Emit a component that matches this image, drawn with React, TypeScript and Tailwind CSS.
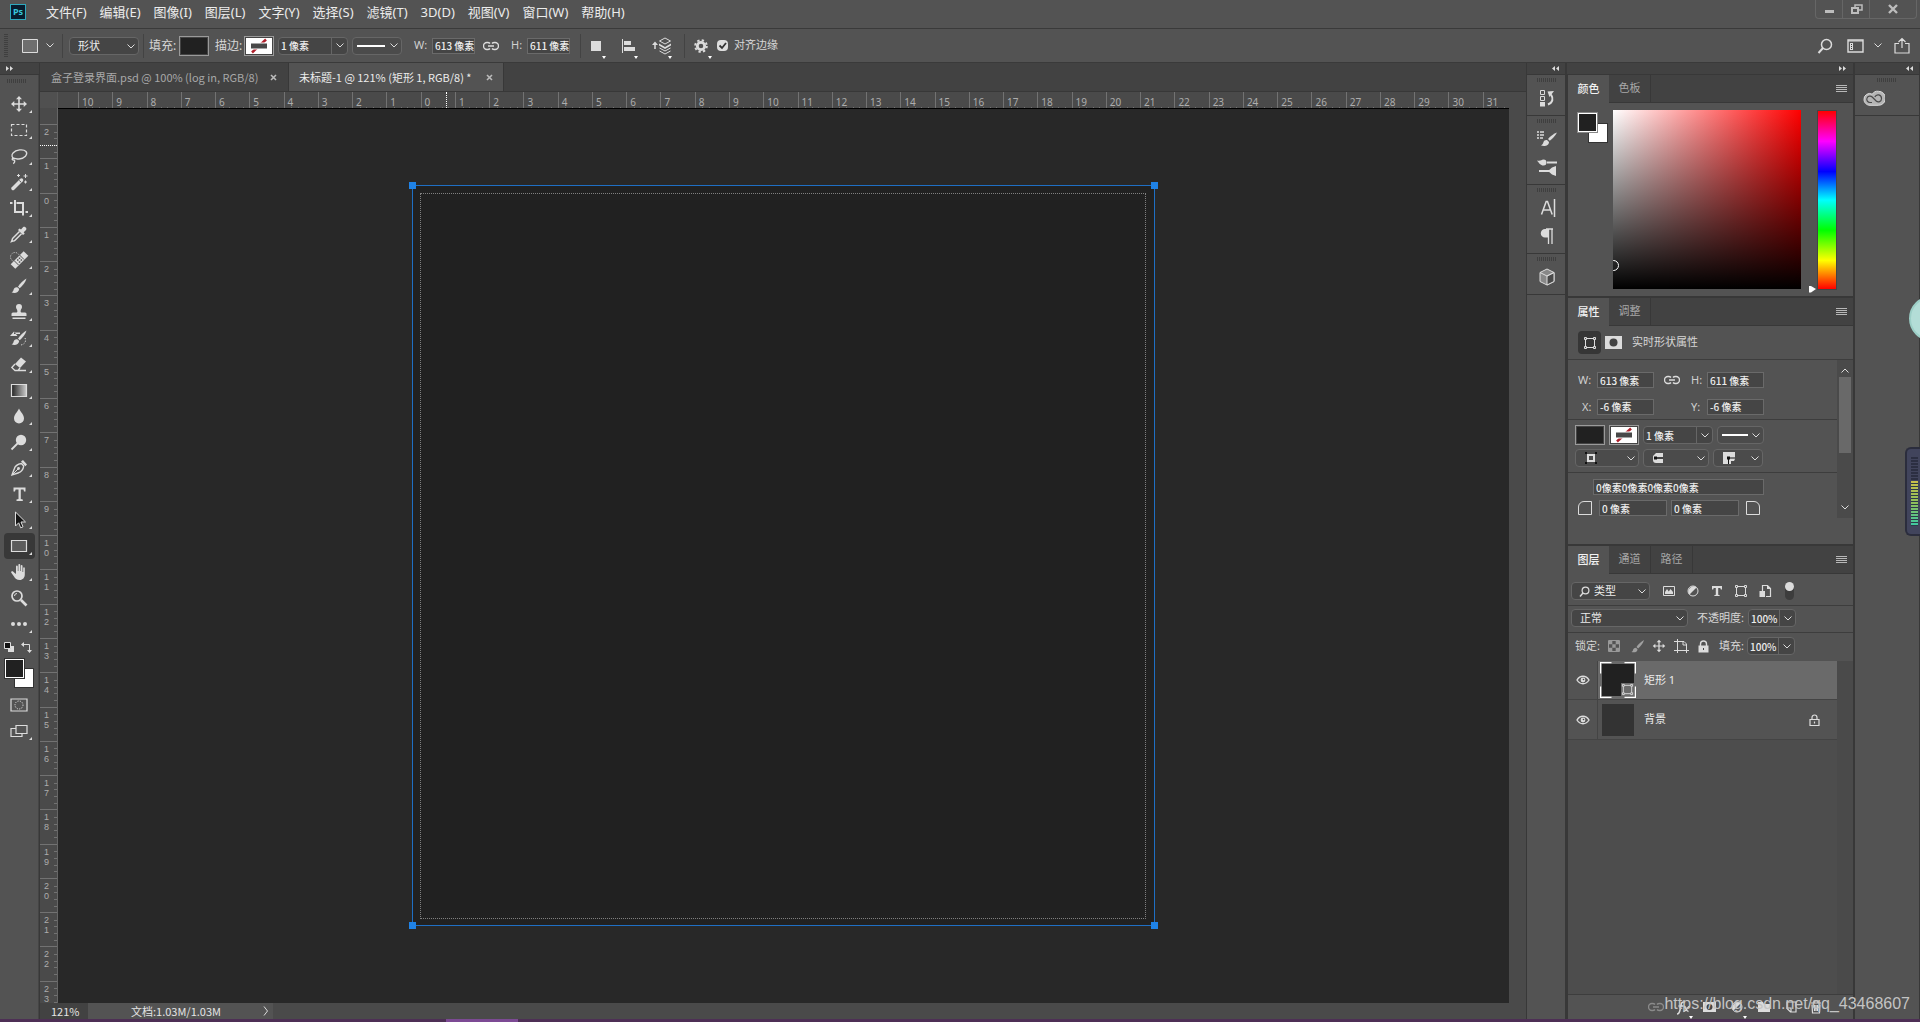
import React from "react";

type IconProps = { w?: number; h?: number; tone?: string; className?: string; children: React.ReactNode };

const Icon: React.FC<IconProps> = ({ w = 20, h = 20, tone = "text-[#dcdcdc]", className = "", children }) => (
  <svg
    width={w}
    height={h}
    viewBox={`0 0 ${w} ${h}`}
    fill="none"
    stroke="none"
    aria-hidden="true"
    className={`shrink-0 ${tone} ${className}`}
  >
    {children}
  </svg>
);

const Chevron: React.FC<{ className?: string }> = ({ className = "" }) => (
  <Icon w={8} h={5} className={className}>
    <path d="M0.5 0.5 4 4 7.5 0.5" stroke="currentColor" />
  </Icon>
);

const LinkIcon: React.FC<{ tone?: string }> = ({ tone }) => (
  <Icon w={16} h={10} tone={tone}>
    <path
      d="M7 2.5C6 1.3 5 1.5 4 1.5a3.5 3.5 0 0 0 0 7c1 0 2 .2 3-1M9 2.5c1-1.2 2-1 3-1a3.5 3.5 0 0 1 0 7c-1 0-2 .2-3-1M5 5h6"
      stroke="currentColor"
      strokeWidth="1.4"
    />
  </Icon>
);

const MenuLines = () => (
  <Icon w={11} h={8} tone="text-[#b8b8b8]">
    <path d="M0 .5h11M0 2.5h11M0 4.5h11M0 6.5h11" stroke="currentColor" />
  </Icon>
);

const Grip = () => (
  <div className="h-1 w-5 bg-[repeating-linear-gradient(90deg,#3f3f3f_0_1px,transparent_1px_2px)]" />
);

const ShapeFrame = () => (
  <>
    <path d="M3.5 3.5h9v9h-9z" stroke="currentColor" />
    <path
      d="M2.5 2.5h2v2h-2zM11.5 2.5h2v2h-2zM2.5 11.5h2v2h-2zM11.5 11.5h2v2h-2z"
      fill="#535353"
      stroke="currentColor"
    />
  </>
);

const MoveGlyph = () => (
  <path
    d="M10 2 7 5.3h2.2v4H5.3V7L2 10l3.3 3v-2.2h3.9v3.9H7L10 18l3-3.3h-2.2v-3.9h3.9V13L18 10l-3.3-3v2.3h-3.9v-4H13z"
    fill="currentColor"
  />
);

const BrushGlyph = () => (
  <>
    <path d="M17.5 2.5c-3 1.5-6.5 5-8.5 8.2l1.8 1.5c3-2.6 5.7-6 6.700-9.700z" fill="currentColor" />
    <path d="M8.3 11.3c-2-.3-3.5 1-3.8 2.7-.2 1.3-1 2-2 2.3 3 1.4 7.3.6 7.700-3.400z" fill="currentColor" />
  </>
);

const tools: { name: string; glyph: React.ReactNode; corner?: boolean; active?: boolean }[] = [
  { name: "移动工具", glyph: <MoveGlyph /> },
  {
    name: "矩形选框工具",
    glyph: <path d="M2.5 4.5h15v11h-15z" stroke="currentColor" strokeWidth="1.2" strokeDasharray="3 2" />,
  },
  {
    name: "套索工具",
    glyph: (
      <path
        d="M5.5 13c-2.7-1-3.3-4-1.5-6C7 3.5 14.5 2.8 17 5.5c2.3 3-1.5 7-7 7.5-2.5.2-5-1.5-6.5-.6-1.3 1.2 1.3 2.2 2.2 1.5M5.5 14c.5 1.5-.2 3-1.3 3.6"
        stroke="currentColor"
        strokeWidth="1.3"
      />
    ),
  },
  {
    name: "魔棒工具",
    glyph: (
      <>
        <path d="m4 16.5 8.5-8.5" stroke="currentColor" strokeWidth="3.5" strokeLinecap="round" />
        <path d="m10.3 8.5 1.7 1.7" stroke="#535353" />
        <path d="M9.5 2v3M8 3.5h3M16.5 2v4M14.5 4h4M16.5 8.5v3M15 10h3" stroke="currentColor" />
      </>
    ),
  },
  {
    name: "裁剪工具",
    glyph: (
      <path d="M6 2v12h8M1 5h2.5M7.5 5H14v12.5M16.5 14H19" stroke="currentColor" strokeWidth="2" />
    ),
  },
  {
    name: "吸管工具",
    glyph: (
      <>
        <path d="M10.5 7.5 4 14c-.8.8-.8 2-1.5 3.5C4 17 5.2 17 6 16.2l6.5-6.5" stroke="currentColor" strokeWidth="1.5" />
        <path d="m9 6 1.5-1.5 1.5 1L14 3.2c1.5-1.5 4.5 1 3 2.8L14.7 8.2l1 1.5L14 11z" fill="currentColor" />
      </>
    ),
  },
  {
    name: "污点修复画笔工具",
    glyph: (
      <>
        <circle cx="6" cy="7" r="4.5" stroke="currentColor" strokeDasharray="1 1.4" />
        <path d="m4 16.5 13-13" stroke="currentColor" strokeWidth="6.5" />
        <path d="m5 10.5 4.5 4.5M10.5 5l4.5 4.5" stroke="#535353" />
        <path d="M8 10h1.5M9.8 8.2h1.5M9.8 12h1.5M11.6 10h1.5" stroke="#535353" strokeWidth="1.5" />
      </>
    ),
  },
  { name: "画笔工具", glyph: <BrushGlyph /> },
  {
    name: "仿制图章工具",
    glyph: (
      <path
        d="M10 2a3 3 0 0 1 3 3c0 1.7-1.4 2.5-1.4 4.3 0 .8.5 1.2 1.4 1.2h3c1 0 1.5.8 1.5 1.5v2h-15v-2c0-.7.5-1.5 1.5-1.5h3c.9 0 1.4-.4 1.4-1.2C8.4 7.5 7 6.7 7 5a3 3 0 0 1 3-3zM3.5 15.5h13V17h-13z"
        fill="currentColor"
      />
    ),
  },
  {
    name: "历史记录画笔工具",
    glyph: (
      <>
        <BrushGlyph />
        <path d="M5 3.5 1 8h7.5zM5 4.5h6v1.5H5z" fill="currentColor" />
        <path d="M16 10c1.5 3 0 6-4 7" stroke="currentColor" strokeDasharray="1.2 1.5" />
      </>
    ),
  },
  {
    name: "橡皮擦工具",
    glyph: (
      <>
        <path d="m12 3.5 5 4-6 6.5-5-4z" fill="currentColor" />
        <path d="m6 10-3.2 3.5L6 16.5h3L11 14M6 16.5h11" stroke="currentColor" strokeWidth="1.3" />
      </>
    ),
  },
  {
    name: "渐变工具",
    glyph: (
      <>
        <defs>
          <linearGradient id="toolGradient">
            <stop offset="0" stopColor="#222" />
            <stop offset="1" stopColor="#ccc" />
          </linearGradient>
        </defs>
        <path d="M2.5 4.5h15v12h-15z" fill="url(#toolGradient)" stroke="currentColor" strokeWidth="1.2" />
      </>
    ),
  },
  {
    name: "模糊工具",
    glyph: <path d="M10 2.5c1.5 3.5 5 6 5 10a5 5 0 0 1-10 0c0-4 3.5-6.5 5-10z" fill="currentColor" />,
  },
  {
    name: "减淡工具",
    glyph: (
      <>
        <circle cx="12" cy="8" r="5.2" fill="currentColor" />
        <path d="m9 11-6.5 6.5" stroke="currentColor" strokeWidth="1.8" />
      </>
    ),
  },
  {
    name: "钢笔工具",
    glyph: (
      <>
        <path d="M12.5 5.5C9 6 6 8 5.2 11L3 17l6-2c3-1 5.3-3.7 5.7-7z" stroke="currentColor" strokeWidth="1.4" />
        <path d="m3 17 6-6" stroke="currentColor" />
        <circle cx="9.5" cy="10.5" r="1.4" fill="currentColor" />
        <path d="m12 3.5 2-1.5 4 4.5-1.7 1.8z" fill="currentColor" />
      </>
    ),
  },
  {
    name: "横排文字工具",
    glyph: (
      <path
        d="M4.5 3.5h12v4H15l-.5-2h-2.7v9.5l2 .5V17H7.5v-1.5l2-.5V5.5H6.6L6 7.5H4.5z"
        fill="currentColor"
      />
    ),
  },
  {
    name: "路径选择工具",
    glyph: <path d="M6.5 2v14l3.2-3.2 2 5 2.3-1-2-4.8h4.5z" fill="#161616" stroke="#dcdcdc" />,
  },
  {
    name: "矩形工具",
    active: true,
    glyph: <path d="M2.5 4.5h15v11h-15z" fill="#5c5c5c" stroke="currentColor" strokeWidth="1.2" />,
  },
  {
    name: "抓手工具",
    glyph: (
      <path
        d="M7 10V4.5c0-1.3 1.7-1.3 1.8 0V9h.6V3c0-1.3 1.8-1.3 1.8 0v6h.6V3.8c0-1.2 1.7-1.2 1.7 0V10h.7V6c0-1.2 1.6-1.1 1.6 0v6.5c0 3-2 5.5-5 5.5-3.3 0-4.5-1.5-5.8-3.5L2.3 10.8c-.7-1.2 1-2 2-1L6.8 12z"
        fill="currentColor"
      />
    ),
  },
  {
    name: "缩放工具",
    corner: false,
    glyph: (
      <>
        <circle cx="8" cy="8" r="5" stroke="currentColor" strokeWidth="1.7" />
        <path d="m12 12 5.5 5.5" stroke="currentColor" strokeWidth="2.6" />
        <path d="M5.5 8A2.5 2.5 0 0 1 8 5.5" stroke="currentColor" />
      </>
    ),
  },
  {
    name: "编辑工具栏",
    glyph: (
      <>
        <circle cx="4" cy="10" r="2" fill="currentColor" />
        <circle cx="10" cy="10" r="2" fill="currentColor" />
        <circle cx="16" cy="10" r="2" fill="currentColor" />
      </>
    ),
  },
];

const menus = [
  "文件(F)", "编辑(E)", "图像(I)", "图层(L)", "文字(Y)", "选择(S)",
  "滤镜(T)", "3D(D)", "视图(V)", "窗口(W)", "帮助(H)",
];

const inputClass =
  "h-4 border border-[#6a6a6a] bg-[#454545] pl-0.5 font-['Noto_Sans_CJK_SC',sans-serif] text-[10px] font-medium text-[#ececec] outline-none";

const Field: React.FC<{ label?: string; name: string; value: string; className: string; labelClass?: string }> = ({
  label,
  name,
  value,
  className,
  labelClass = "",
}) => (
  <div className="flex items-center">
    {label && (
      <label htmlFor={name} className={`text-[11px] text-[#d0d0d0] ${labelClass}`}>
        {label}
      </label>
    )}
    <input id={name} aria-label={label ? undefined : name} defaultValue={value} className={`${inputClass} ${className}`} />
  </div>
);

const Combo: React.FC<{ name: string; value: string; className: string }> = ({ name, value, className }) => (
  <div className="flex h-[18px] rounded-sm border border-[#666] bg-[#454545]">
    <input
      id={name}
      aria-label={name}
      defaultValue={value}
      className={`bg-transparent pl-0.5 font-['Noto_Sans_CJK_SC',sans-serif] text-[10px] font-medium text-[#ececec] outline-none ${className}`}
    />
    <button aria-label={`${name}选项`} className="flex w-4 items-center justify-center border-l border-[#666]">
      <Chevron />
    </button>
  </div>
);

const Dropdown: React.FC<{ name: string; value: string; className: string; selectClass?: string; icon?: React.ReactNode }> = ({
  name,
  value,
  className,
  selectClass = "pl-2",
  icon,
}) => (
  <div className={`relative h-[18px] rounded-sm border border-[#666] bg-[#454545] ${className}`}>
    {icon}
    <select
      aria-label={name}
      className={`block h-full w-full appearance-none bg-transparent text-[11px] leading-4 text-[#ececec] outline-none ${selectClass}`}
    >
      <option>{value}</option>
    </select>
    <Chevron className="pointer-events-none absolute top-[6px] right-[3px]" />
  </div>
);

const IconDropdown: React.FC<{ name: string; className: string; children: React.ReactNode }> = ({
  name,
  className,
  children,
}) => (
  <button
    aria-label={name}
    className={`flex h-[18px] items-center justify-between rounded-sm border border-[#666] bg-[#4b4b4b] pr-[3px] ${className}`}
  >
    {children}
    <Chevron />
  </button>
);

const FillSwatch: React.FC<{ none?: boolean }> = ({ none }) => (
  <button
    aria-label={none ? "描边" : "填充"}
    className="flex h-5 w-[30px] shrink-0 border border-[#9a9a9a] bg-[#444] p-px"
  >
    {none ? (
      <Icon w={26} h={16}>
        <path d="M0 0h26v16H0z" fill="#fff" />
        <path d="M6 14.5 20 1.5" stroke="#b0202c" strokeWidth="2.5" />
        <path d="M4 4.500h18v7H4z" fill="#fff" />
        <path d="M5 5.500h16v5H5z" fill="#484848" />
      </Icon>
    ) : (
      <span className="h-full w-full bg-[#212121]" />
    )}
  </button>
);

const Separator = () => <div className="h-6 w-px bg-[#434343]" />;

const Corner: React.FC<{ className?: string }> = ({ className = "" }) => (
  <Icon w={4} h={3} tone="text-white" className={`absolute ${className}`}>
    <path d="M0 0h4L2 3z" fill="currentColor" />
  </Icon>
);

const MenuBar = () => (
  <header className="flex h-[29px] shrink-0 items-start border-b border-[#3a3a3a] pl-2.5">
    <div className="mt-1 flex size-4 items-center justify-center border border-[#2fa8bd] bg-[#071c2e] text-[9px] font-bold text-[#38c6dc]">
      Ps
    </div>
    <nav className="ml-5 flex h-[25px] items-center gap-[13px] text-[13px] text-[#ececec]">
      {menus.map((m) => (
        <button key={m} className="whitespace-nowrap">
          {m}
        </button>
      ))}
    </nav>
    <div className="mr-[3px] ml-auto flex h-[19px] rounded-b-sm border border-t-0 border-[#666]">
      <button aria-label="最小化" className="flex w-[27px] items-center justify-center border-r border-[#666]">
        <Icon w={11} h={12}>
          <path d="M1 7h9v3H1z" fill="#bdbdbd" />
        </Icon>
      </button>
      <button aria-label="还原" className="flex w-[27px] items-center justify-center border-r border-[#666]">
        <Icon w={13} h={12}>
          <path d="M5 2h7v5H5z" stroke="#bdbdbd" strokeWidth="1.5" />
          <path d="M2 5h6v5H2z" fill="#535353" stroke="#bdbdbd" strokeWidth="2" />
        </Icon>
      </button>
      <button aria-label="关闭" className="flex w-[46px] items-center justify-center">
        <Icon w={12} h={10}>
          <path d="m2 1 8 8M10 1 2 9" stroke="#bdbdbd" strokeWidth="2.4" />
        </Icon>
      </button>
    </div>
  </header>
);

const OptionsBar = () => (
  <div className="flex h-[34px] shrink-0 items-center border-b border-[#3a3a3a] text-xs text-[#d6d6d6]">
    <div className="ml-1 h-6 w-1 bg-[repeating-linear-gradient(#3f3f3f_0_1px,transparent_1px_2px)]" />
    <button aria-label="矩形工具预设" className="ml-3.5 flex items-center gap-2">
      <Icon w={16} h={14}>
        <path d="M.5.5h15v13H.5z" fill="#6e6e6e" stroke="currentColor" />
      </Icon>
      <Chevron />
    </button>
    <div className="mr-1.5 ml-2">
      <Separator />
    </div>
    <Dropdown name="工具模式" value="形状" className="w-[70px]" />
    <div className="mx-1">
      <Separator />
    </div>
    <span className="ml-px w-[30px] whitespace-nowrap">填充:</span>
    <FillSwatch />
    <span className="ml-1.5 w-[29px] whitespace-nowrap">描边:</span>
    <FillSwatch none />
    <div className="ml-1 flex gap-1">
      <Combo name="描边宽度" value="1 像素" className="w-[52px]" />
      <IconDropdown name="描边类型" className="w-[50px] pl-1">
        <div className="h-0.5 w-7 bg-white" />
      </IconDropdown>
    </div>
    <div className="ml-3">
      <Field label="W:" name="opt-w" value="613 像素" className="w-[43px]" labelClass="w-[18px]" />
    </div>
    <button aria-label="链接宽高" className="mx-2">
      <LinkIcon />
    </button>
    <div className="ml-1">
      <Field label="H:" name="opt-h" value="611 像素" className="w-[43px]" labelClass="w-4" />
    </div>
    <div className="mr-2 ml-2.5">
      <Separator />
    </div>
    <button aria-label="路径操作" className="relative ml-px flex h-6 w-5 items-center">
      <Icon w={12} h={12}>
        <path d="M1 1h10v10H1z" fill="currentColor" />
      </Icon>
      <Corner className="top-[22px] left-3" />
    </button>
    <button aria-label="路径对齐" className="relative ml-3 flex h-6 w-5 items-center">
      <Icon w={14} h={14}>
        <path d="M.5 0v14" stroke="currentColor" />
        <path d="M2 2h7v4H2zM2 8h11v4H2z" fill="currentColor" />
      </Icon>
      <Corner className="top-[22px] left-3" />
    </button>
    <button aria-label="路径排列" className="relative ml-2.5 flex h-6 w-5 items-center">
      <Icon w={20} h={18}>
        <path d="M3 12V6" stroke="currentColor" strokeWidth="1.5" />
        <path d="M0 8 3 4.5 6 8z" fill="currentColor" />
        <path d="m13 1 5.5 3L13 7 7.5 4z" stroke="currentColor" />
        <path d="M7 6.5 13 10l6-3.5v2L13 12 7 8.5z" fill="currentColor" />
        <path d="m7.5 11 5.5 3 5.5-3M7.5 14l5.5 3 5.5-3" stroke="currentColor" />
      </Icon>
      <Corner className="top-[22px] left-4" />
    </button>
    <div className="mr-2 ml-3">
      <Separator />
    </div>
    <button aria-label="设置" className="relative flex h-6 w-5 items-center">
      <Icon w={16} h={16}>
        <circle cx="8" cy="8" r="3.7" stroke="currentColor" strokeWidth="2.8" />
        <circle cx="8" cy="8" r="5.8" stroke="currentColor" strokeWidth="2" strokeDasharray="2.3 2.26" />
      </Icon>
      <Corner className="top-[22px] left-[15px]" />
    </button>
    <label className="ml-1 flex items-center gap-1.5 whitespace-nowrap text-[11px]">
      <span className="relative flex size-[11px]">
        <input type="checkbox" defaultChecked className="size-[11px] appearance-none rounded-sm bg-[#dedede]" />
        <Icon w={11} h={11} className="pointer-events-none absolute inset-0">
          <path d="M2.5 5.5 5 8l4-5" stroke="#333" strokeWidth="1.8" />
        </Icon>
      </span>
      对齐边缘
    </label>
    <div className="mr-2.5 ml-auto flex items-center">
      <button aria-label="搜索">
        <Icon w={16} h={16}>
          <circle cx="9.5" cy="6.5" r="5" stroke="currentColor" strokeWidth="1.5" />
          <path d="m6 10-4.5 5" stroke="currentColor" strokeWidth="2" />
        </Icon>
      </button>
      <button aria-label="工作区" className="ml-3.5 flex items-center gap-2.5">
        <Icon w={17} h={14}>
          <path d="M1 1h15v12H1z" stroke="currentColor" strokeWidth="1.4" />
          <path d="M1 2h15" stroke="currentColor" />
          <path d="M3 4h3v7H3z" fill="currentColor" />
          <path d="M4 5.5h1M4 7.5h1M4 9.5h1" stroke="#333" />
        </Icon>
        <Chevron />
      </button>
      <button aria-label="共享" className="ml-3">
        <Icon w={16} h={18}>
          <path d="M5 6.5H1V16h14V6.5h-4M8 11V1.5M4.5 5 8 1.5 11.5 5" stroke="currentColor" strokeWidth="1.2" />
        </Icon>
      </button>
    </div>
  </div>
);

const Arrows: React.FC<{ left?: boolean }> = ({ left }) => (
  <Icon w={8} h={5} className={left ? "rotate-180" : ""}>
    <path d="M0 0l3 2.5L0 5zM4 0l3 2.5L4 5z" fill="currentColor" />
  </Icon>
);

const Toolbar = () => (
  <aside className="flex w-10 shrink-0 flex-col border-r border-[#383838]">
    <div className="flex h-3 shrink-0 items-center border-b border-[#383838] bg-[#424242] pl-1.5">
      <Arrows />
    </div>
    <div className="flex flex-1 flex-col border-r border-[#454545]">
      <div className="flex h-4 shrink-0 items-start justify-center pt-1 pr-1">
        <Grip />
      </div>
      {tools.map((t) => (
        <button
          key={t.name}
          aria-label={t.name}
          className={`relative ml-1 flex h-[26px] w-[31px] shrink-0 items-center justify-center pr-0.5 ${t.active ? "rounded-sm bg-[#383838]" : ""}`}
        >
          <Icon>{t.glyph}</Icon>
          {t.corner !== false && (
            <Icon w={3} h={3} className="absolute right-[3px] bottom-1">
              <path d="M3 0v3H0z" fill="currentColor" />
            </Icon>
          )}
        </button>
      ))}
      <div className="flex h-5 items-center justify-between pr-1.5 pl-1">
        <button aria-label="默认颜色">
          <Icon w={10} h={10}>
            <path d="M4 4h6v6H4z" fill="currentColor" />
            <path d="M.5.5h6v6h-6z" fill="#111" stroke="#dcdcdc" />
          </Icon>
        </button>
        <button aria-label="切换颜色">
          <Icon w={11} h={11}>
            <path d="M2 2.5h6.5V9" stroke="currentColor" />
            <path d="M0 2.5 3 0v5zM8.5 11 6 8h5z" fill="currentColor" />
          </Icon>
        </button>
      </div>
      <div className="relative mt-0.5 ml-[5px] h-[29px] w-[29px] shrink-0">
        <button aria-label="背景色" className="absolute right-0 bottom-0 size-5 border border-[#333] bg-white" />
        <button
          aria-label="前景色"
          className="absolute top-0 left-0 size-[19px] border border-white bg-[#212121] outline outline-[#333]"
        />
      </div>
      <button aria-label="快速蒙版" className="mt-1 ml-1 flex h-[26px] w-[29px] items-center justify-center">
        <Icon w={18} h={14}>
          <path d="M1 1h16v12H1z" stroke="currentColor" strokeWidth="1.2" />
          <circle cx="9" cy="7" r="4" stroke="currentColor" strokeDasharray="1.2 1.2" />
        </Icon>
      </button>
      <button aria-label="屏幕模式" className="relative ml-1 flex h-[26px] w-[31px] items-center justify-center pr-0.5">
        <Icon w={18} h={14}>
          <path d="M1 4.5h11v8H1z" stroke="currentColor" strokeWidth="1.2" />
          <path d="M6 1.5h11v8H6z" fill="#535353" stroke="currentColor" strokeWidth="1.2" />
        </Icon>
        <Icon w={3} h={3} className="absolute right-[3px] bottom-1">
          <path d="M3 0v3H0z" fill="currentColor" />
        </Icon>
      </button>
    </div>
  </aside>
);

const topMarks = Array.from({ length: 42 }, (_, i) => Math.abs(i - 10));
const sideMarks = Array.from({ length: 26 }, (_, i) => Math.abs(i - 2));
const minor = [0, 1, 2, 3, 4];

const TopRuler = () => (
  <div className="relative flex h-[17px] shrink-0 overflow-hidden border-t border-[#383838] bg-[#4a4a4a]">
    <div className="w-[18px] shrink-0 border-r border-[#5a5a5a] bg-[#505050]" />
    <div className="w-5 shrink-0" />
    <div className="grid w-[1439px] shrink-0 grid-cols-[repeat(42,minmax(0,1fr))]">
      {topMarks.map((n, i) => (
        <div key={i} className="relative border-l border-[#727272]">
          <span className="block pt-0.5 pl-[3px] text-[10px] leading-4 text-[#adadad]">{n}</span>
          <div className="absolute inset-x-0 bottom-0 grid h-[3px] grid-cols-5">
            {minor.map((m) => (
              <i key={m} className={m ? "border-l border-[#727272]" : ""} />
            ))}
          </div>
        </div>
      ))}
    </div>
    <div className="absolute top-0 left-[406px] h-full border-l border-dotted border-white" />
    <div className="absolute inset-y-0 right-0 w-[17px] bg-[#4a4a4a]" />
  </div>
);

const SideRuler = () => (
  <div className="relative flex w-[18px] shrink-0 flex-col overflow-hidden border-r border-[#666] bg-[#4a4a4a]">
    <div className="h-4 shrink-0" />
    <div className="grid h-[891px] shrink-0 grid-rows-[repeat(26,minmax(0,1fr))]">
      {sideMarks.map((n, i) => (
        <div
          key={i}
          className="relative border-t border-[#727272] pt-0.5 pl-1 font-['Liberation_Sans',sans-serif] text-[9px] leading-[10px] text-[#adadad]"
        >
          {String(n)
            .split("")
            .map((d, k) => (
              <span key={k} className="block">
                {d}
              </span>
            ))}
          <div className="absolute inset-y-0 right-0 grid w-[3px] grid-rows-5">
            {minor.map((m) => (
              <i key={m} className={m ? "border-t border-[#727272]" : ""} />
            ))}
          </div>
        </div>
      ))}
    </div>
    <div className="absolute top-[37px] left-0 w-full border-t border-dotted border-white" />
  </div>
);

const Canvas = () => (
  <div className="relative min-w-0 flex-1 overflow-hidden border-t border-black bg-[#282828]">
    <div className="absolute top-[76px] left-[354px] h-[741px] w-[743px] border border-[#1f6fc4] bg-[#212121]">
      <div className="absolute top-[7px] right-2 bottom-1.5 left-[7px] border border-dotted border-[#808080]" />
      <span className="absolute -top-1 -left-1 size-[7px] bg-[#1f82e6]" />
      <span className="absolute -top-1 -right-1 size-[7px] bg-[#1f82e6]" />
      <span className="absolute -bottom-1 -left-1 size-[7px] bg-[#1f82e6]" />
      <span className="absolute -right-1 -bottom-1 size-[7px] bg-[#1f82e6]" />
    </div>
  </div>
);

const CloseTab = () => (
  <button aria-label="关闭">
    <Icon w={7} h={7}>
      <path d="m1 1 5 5M6 1 1 6" stroke="#bbb" strokeWidth="1.6" />
    </Icon>
  </button>
);

const Workspace = () => (
  <main className="flex min-w-0 flex-1 flex-col border-r border-[#383838]">
    <div className="flex h-7 shrink-0 bg-[#424242] font-['Noto_Sans_CJK_SC',sans-serif] text-[11px]">
      <div className="flex w-[249px] items-center justify-between border-r border-[#383838] pr-[11px] pl-[11px] text-[#a8a8a8]">
        <button className="whitespace-nowrap">盒子登录界面.psd @ 100% (log in, RGB/8)</button>
        <CloseTab />
      </div>
      <div className="flex w-[215px] items-center justify-between border-r border-[#383838] bg-[#535353] pr-2.5 pl-2.5 text-[#ececec]">
        <button className="whitespace-nowrap">未标题-1 @ 121% (矩形 1, RGB/8) *</button>
        <CloseTab />
      </div>
    </div>
    <TopRuler />
    <div className="flex min-h-0 flex-1">
      <SideRuler />
      <Canvas />
      <div className="w-[17px] shrink-0 bg-[#4a4a4a]" />
    </div>
    <div className="flex h-4 shrink-0 items-center bg-[#4a4a4a] font-['Noto_Sans_CJK_SC',sans-serif] text-[11px] leading-4 text-[#e4e4e4]">
      <div className="w-12 bg-[#424242] pl-[11px]">121%</div>
      <div className="flex w-[185px] items-center justify-between bg-[#535353] pr-1 pl-[43px]">
        <span>文档:1.03M/1.03M</span>
        <Icon w={6} h={10}>
          <path d="M1 .5 4.5 5 1 9.5" stroke="currentColor" />
        </Icon>
      </div>
    </div>
  </main>
);

const stripGroups: { height: string; items: { name: string; glyph: React.ReactNode }[] }[] = [
  {
    height: "h-[41px]",
    items: [
      {
        name: "历史记录",
        glyph: (
          <>
            <path d="M3.5 2.5h4v4h-4zM3.5 8.5h4v4h-4z" stroke="currentColor" />
            <path d="M3 14h5v4.5H3z" fill="currentColor" />
            <path d="M11 16.5c5-2 5.5-6 3-10" stroke="currentColor" strokeWidth="2" />
            <path d="m10.5 3.5 6.5-.5-4.5 6z" fill="currentColor" />
          </>
        ),
      },
    ],
  },
  {
    height: "h-[69px]",
    items: [
      {
        name: "画笔",
        glyph: (
          <>
            <path d="M0 3h2M0 6h2M0 9h2M3 3h4M3 6h4M3 9h3" stroke="currentColor" strokeWidth="1.5" />
            <path d="M20 3.5c-3 1-7 4-9 6.5l1.8 1.7C15.5 9.5 18.5 6.5 20 3.5z" fill="currentColor" />
            <path d="M10 11c-2-.3-3 .7-3.5 2-.3 1.5-1 2.5-2.5 3.5 3.5 1 8 .5 8-3.5z" fill="currentColor" />
          </>
        ),
      },
      {
        name: "画笔设置",
        glyph: (
          <>
            <path d="M10 5.5h10M2 14h11" stroke="currentColor" strokeWidth="2" />
            <path d="M0 3.5c4 1 4-1 6.5-1a3 3 0 0 1 0 6C3.5 8.5 2 6 0 3.5zM11 14l4-3.5 4-1.5v10l-4-1.5z" fill="currentColor" />
          </>
        ),
      },
    ],
  },
  {
    height: "h-[69px]",
    items: [
      {
        name: "字符",
        glyph: (
          <path d="m4.500 16.500 4.700-13h1.300l4.700 13M6 12h7.700M17.500 1v18" stroke="currentColor" strokeWidth="1.5" />
        ),
      },
      {
        name: "段落",
        glyph: (
          <>
            <path d="M11 3H8a4 4 0 0 0 0 8.5h3z" fill="currentColor" />
            <path d="M9 3h7M11.5 3v15M15 3v15" stroke="currentColor" strokeWidth="1.3" />
          </>
        ),
      },
    ],
  },
  {
    height: "h-[41px]",
    items: [
      {
        name: "3D",
        glyph: (
          <>
            <path d="m10 2 7 3.5v9L10 18l-7-3.5v-9z" fill="#888" stroke="currentColor" />
            <path d="M10 9v9l7-3.5v-9z" fill="#4a4a4a" stroke="currentColor" />
            <path d="m3 5.500 7 3.500 7-3.500" stroke="currentColor" />
          </>
        ),
      },
    ],
  },
];

const IconStrip = () => (
  <aside className="flex w-10 shrink-0 flex-col border-r-2 border-[#383838]">
    <div className="flex h-3 shrink-0 items-center justify-end border-b border-[#383838] bg-[#424242] pr-1.5">
      <Arrows left />
    </div>
    {stripGroups.map((g, i) => (
      <div key={i} className={`flex shrink-0 flex-col items-center border-b border-[#383838] pt-[3px] pl-0.5 ${g.height}`}>
        <Grip />
        <div className="mt-1.5 flex flex-col gap-2">
          {g.items.map((it) => (
            <button key={it.name} aria-label={it.name}>
              <Icon>{it.glyph}</Icon>
            </button>
          ))}
        </div>
      </div>
    ))}
  </aside>
);

const PanelTabs: React.FC<{ tabs: string[] }> = ({ tabs }) => (
  <div className="flex h-7 shrink-0 items-stretch border-b border-[#383838] bg-[#424242] text-[11px]">
    {tabs.map((t, i) => (
      <button
        key={t}
        className={
          i === 0
            ? "-mb-px w-[41px] bg-[#535353] font-medium text-[#f2f2f2]"
            : "w-[42px] border-r border-[#383838] text-[#a8a8a8]"
        }
      >
        {t}
      </button>
    ))}
    <button aria-label={`${tabs[0]}面板菜单`} className="mr-1.5 ml-auto">
      <MenuLines />
    </button>
  </div>
);

const ColorPanel = () => (
  <section className="shrink-0 border-b-2 border-[#383838]">
    <PanelTabs tabs={["颜色", "色板"]} />
    <div className="flex h-[193px] pt-[7px]">
      <div className="relative mt-[3px] ml-2.5 h-[30px] w-[30px] shrink-0">
        <button aria-label="背景" className="absolute right-0 bottom-0 size-5 border border-[#333] bg-white" />
        <button
          aria-label="前景"
          className="absolute top-0 left-0 size-[19px] border border-white bg-[#212121] outline outline-[#888]"
        />
      </div>
      <div className="relative ml-[5px] h-[179px] flex-1 overflow-hidden bg-[linear-gradient(to_top,#000,transparent),linear-gradient(to_right,#fff,#f00)]">
        <span className="absolute bottom-[18px] -left-[5px] size-[11px] rounded-full border border-white" />
      </div>
      <div className="relative mr-4 ml-4 h-[180px] w-5 border border-[#444] bg-[linear-gradient(#f00,#f0f_17%,#00f_34%,#0ff_50%,#0f0_67%,#ff0_84%,#f00)]">
        <Icon w={8} h={8} className="absolute -bottom-1 -left-[10px]">
          <path d="M1 1h2l5 3-5 3.5H1z" fill="#fff" />
        </Icon>
      </div>
    </div>
  </section>
);

const PropertiesPanel = () => (
  <section className="shrink-0 border-b-2 border-[#383838]">
    <PanelTabs tabs={["属性", "调整"]} />
    <div className="flex h-[34px] items-center border-b border-[#3d3d3d] pl-2.5 text-[#d6d6d6]">
      <button aria-label="实时形状" className="flex size-[23px] items-center justify-center rounded-sm bg-[#363636]">
        <Icon w={16} h={16}>
          <ShapeFrame />
        </Icon>
      </button>
      <button aria-label="蒙版" className="ml-1">
        <Icon w={17} h={13}>
          <path d="M0 0h17v13H0z" fill="currentColor" />
          <circle cx="8.5" cy="6.5" r="4" fill="#444" />
        </Icon>
      </button>
      <h2 className="ml-2.5 text-[11px]">实时形状属性</h2>
    </div>
    <div className="flex h-[158px]">
      <div className="flex-1">
        <div className="flex h-[60px] flex-col gap-2.5 border-b border-[#3d3d3d] pt-3 pl-2.5">
          <div className="flex items-center">
            <Field label="W:" name="prop-w" value="613 像素" className="w-[57px]" labelClass="w-[19px]" />
            <button aria-label="链接形状宽高" className="ml-2.5">
              <LinkIcon />
            </button>
            <div className="ml-[11px]">
              <Field label="H:" name="prop-h" value="611 像素" className="w-[57px]" labelClass="w-[16px]" />
            </div>
          </div>
          <div className="flex items-center">
            <Field label="X:" name="prop-x" value="-6 像素" className="w-[57px]" labelClass="w-[19px] pl-1" />
            <div className="ml-[37px]">
              <Field label="Y:" name="prop-y" value="-6 像素" className="w-[57px]" labelClass="w-[16px]" />
            </div>
          </div>
        </div>
        <div className="flex h-[53px] flex-col gap-1 border-b border-[#3d3d3d] pt-[5px] pl-[7px]">
          <div className="flex items-center gap-1">
            <FillSwatch />
            <FillSwatch none />
            <Combo name="形状描边宽度" value="1 像素" className="w-[52px]" />
            <IconDropdown name="形状描边类型" className="w-[47px] pl-1">
              <div className="h-0.5 w-[26px] bg-white" />
            </IconDropdown>
          </div>
          <div className="flex items-center gap-1">
            <IconDropdown name="描边对齐" className="w-16 pl-2">
              <Icon w={14} h={14}>
                <path d="M4 4h6v6H4z" stroke="currentColor" strokeWidth="2" />
                <path d="M1.5 1.5h11v11h-11z" stroke="#111" strokeDasharray="1.5 8 1.5 0" />
                <path d="M1 1h2v2H1zM11 1h2v2h-2zM1 11h2v2H1zM11 11h2v2h-2z" fill="#111" />
              </Icon>
            </IconDropdown>
            <IconDropdown name="描边端点" className="w-[66px] pl-2">
              <Icon w={12} h={12}>
                <path d="M4 1h7v10H4a3 3 0 0 1-3-3V4z" fill="currentColor" />
                <path d="M3 6h8" stroke="#111" strokeWidth="1.5" />
                <path d="M2 4.5h3v3H2z" fill="#111" />
              </Icon>
            </IconDropdown>
            <IconDropdown name="描边角点" className="w-[50px] pl-2">
              <Icon w={14} h={12}>
                <path d="M1 0h12v7l-1 2H9v3H1z" fill="currentColor" />
                <path d="M6.5 12V6H13" stroke="#111" />
                <path d="M5 4.5h3v3H5z" fill="#111" />
              </Icon>
            </IconDropdown>
          </div>
        </div>
        <div className="flex flex-col gap-[5px] pt-1.5 pl-2.5">
          <div className="ml-[15px]">
            <Field name="全部圆角半径" value="0像素0像素0像素0像素" className="w-[171px]" />
          </div>
          <div className="flex items-center">
            <Icon w={14} h={14}>
              <path d="M.5 13.5V6A5.5 5.5 0 0 1 6 .5h7.5v13z" stroke="currentColor" />
            </Icon>
            <div className="ml-[7px] flex gap-1">
              <Field name="左上角半径" value="0 像素" className="w-[68px]" />
              <Field name="右上角半径" value="0 像素" className="w-[68px]" />
            </div>
            <Icon w={14} h={14} className="ml-[7px]">
              <path d="M.5 13.5V.5H8A5.5 5.5 0 0 1 13.5 6v7.5z" stroke="currentColor" />
            </Icon>
          </div>
        </div>
      </div>
      <div className="flex w-4 shrink-0 flex-col items-center bg-[#4a4a4a] py-2">
        <Chevron className="rotate-180" />
        <div className="mt-1 h-[76px] w-3 bg-[#696969]" />
        <Chevron className="mt-auto" />
      </div>
    </div>
    <div className="h-[26px]" />
  </section>
);

const filterIcons: { name: string; glyph: React.ReactNode }[] = [
  {
    name: "像素图层滤镜",
    glyph: (
      <>
        <path d="M2.5 3.5h11v9h-11z" stroke="currentColor" />
        <path d="M4 11V9l2-3 1.8 2.5L9.500 6 12 9v2z" fill="currentColor" />
      </>
    ),
  },
  {
    name: "调整图层滤镜",
    glyph: (
      <>
        <circle cx="8" cy="8" r="5" stroke="currentColor" />
        <path d="M4.5 11.5a5 5 0 0 1 7-7z" fill="currentColor" />
      </>
    ),
  },
  {
    name: "文字图层滤镜",
    glyph: <path d="M3 3h10v3.5h-1.2L11.300 5H9.2v6.8l1.5.4V13H5.300v-.8l1.500-.4V5H4.700l-.5 1.500H3z" fill="currentColor" />,
  },
  { name: "形状图层滤镜", glyph: <ShapeFrame /> },
  {
    name: "智能对象滤镜",
    glyph: (
      <>
        <path d="M5.5 8V2.5h5l3 3v8H9" stroke="currentColor" strokeWidth="1.2" />
        <path d="M10 2v4h4M2.5 8H8v6H2.5z" fill="currentColor" />
      </>
    ),
  },
];

const Eye = () => (
  <Icon w={14} h={10}>
    <path d="M1 5c3-5 9-5 12 0-3 5-9 5-12 0z" stroke="currentColor" strokeWidth="1.4" />
    <circle cx="7" cy="5" r="2.4" fill="currentColor" />
    <circle cx="7.5" cy="4.5" r=".8" fill="#444" />
  </Icon>
);

const LayersPanel = () => (
  <section className="flex min-h-0 flex-1 flex-col">
    <PanelTabs tabs={["图层", "通道", "路径"]} />
    <div className="flex h-8 shrink-0 items-center border-b border-[#3d3d3d] pt-0.5 pl-[3px]">
      <Dropdown
        name="图层滤镜类型"
        value="类型"
        className="w-[79px]"
        selectClass="pl-[22px]"
        icon={
          <Icon w={11} h={11} className="pointer-events-none absolute top-[3px] left-[7px]">
            <circle cx="6.5" cy="4.5" r="3.4" stroke="currentColor" strokeWidth="1.2" />
            <path d="m4 7-3 3.5" stroke="currentColor" strokeWidth="1.5" />
          </Icon>
        }
      />
      <div className="ml-[11px] flex gap-2">
        {filterIcons.map((f) => (
          <button key={f.name} aria-label={f.name}>
            <Icon w={16} h={16}>{f.glyph}</Icon>
          </button>
        ))}
      </div>
      <button aria-label="打开或关闭图层滤镜" className="ml-3 h-[18px] w-[9px] rounded-full bg-[#3d3d3d]">
        <span className="-mt-2 block size-[9px] rounded-full bg-[#dcdcdc]" />
      </button>
    </div>
    <div className="flex h-[27px] shrink-0 items-center border-b border-[#3d3d3d] pb-0.5 pl-[3px] text-[11px] text-[#d6d6d6]">
      <Dropdown name="混合模式" value="正常" className="w-[117px]" />
      <label htmlFor="不透明度" className="ml-[9px] w-[51px] whitespace-nowrap">不透明度:</label>
      <Combo name="不透明度" value="100%" className="w-[30px]" />
    </div>
    <div className="flex h-7 shrink-0 items-center pb-0.5 pl-[7px] text-[11px] text-[#d6d6d6]">
      <span className="w-[33px] whitespace-nowrap">锁定:</span>
      <button aria-label="锁定透明像素" className="w-[22px]">
        <Icon w={12} h={12} tone="text-[#999]">
          <path d="M.5.5h11v11H.5z" stroke="currentColor" />
          <path d="M1 1h3.3v3.3H1zM7.7 1H11v3.3H7.700zM4.300 4.300h3.400v3.400H4.300zM1 7.700h3.300V11H1zM7.700 7.700H11V11H7.700z" fill="currentColor" />
        </Icon>
      </button>
      <button aria-label="锁定图像像素" className="w-[22px]">
        <Icon w={16} h={18} tone="text-[#a0a0a0]">
          <path d="M14 3c-3 1.5-6 4.5-7.5 7l1.7 1.4C11 9 13 6.5 14 3zM6 10.7c-2 0-2.7 1-3 2.3-.2 1-.6 1.5-1.5 2 2.5.8 6 .3 6-2.8z" fill="currentColor" />
        </Icon>
      </button>
      <button aria-label="锁定位置" className="w-[22px]">
        <svg width="14" height="14" viewBox="1 1 18 18" className="text-[#dcdcdc]" aria-hidden="true">
          <MoveGlyph />
        </svg>
      </button>
      <button aria-label="防止画板内外自动嵌套" className="w-6">
        <Icon w={15} h={14}>
          <path d="M3.5 0v14M0 2.5h10M0 11.5h15M12.5 14V5L10 2.5H7M9 2v4h4" stroke="currentColor" />
        </Icon>
      </button>
      <button aria-label="锁定全部" className="w-[21px]">
        <Icon w={11} h={13}>
          <path d="M.5 5.5h10v7H.5z" fill="currentColor" />
          <path d="M2.5 6V4a3 3 0 0 1 6 0v2" stroke="currentColor" strokeWidth="1.4" />
          <path d="M5.5 8v2" stroke="#444" />
        </Icon>
      </button>
      <label htmlFor="填充不透明度" className="w-7 whitespace-nowrap">填充:</label>
      <Combo name="填充不透明度" value="100%" className="w-[30px]" />
    </div>
    <div className="flex min-h-0 flex-1 bg-[#4d4d4d]">
      <ul className="flex-1 text-[11px] text-[#ececec]">
        <li className="flex h-[39px] border-b border-[#444]">
          <button aria-label="隐藏矩形 1" className="flex w-[30px] items-center justify-center border-r border-[#444] bg-[#535353]">
            <Eye />
          </button>
          <div className="flex flex-1 items-center bg-[#6a6a6a] pl-0.5">
            <div className="relative flex size-9 items-center justify-center">
              <div className="size-8 bg-[#212121]" />
              <Icon w={36} h={36} className="absolute inset-0">
                <path d="M.5 11.5V.5h11M24.5.5h11v11M.5 24.5v11h11M24.5 35.5h11v-11" stroke="#fff" strokeWidth="1.4" />
              </Icon>
              <div className="absolute right-0.5 bottom-0.5 bg-[#6a6a6a]">
                <svg width="13" height="13" viewBox="1 1 14 14" fill="none" className="text-[#dcdcdc]" aria-hidden="true">
                  <ShapeFrame />
                </svg>
              </div>
            </div>
            <span className="ml-2">矩形 1</span>
          </div>
        </li>
        <li className="flex h-10 border-b border-[#444] bg-[#535353]">
          <button aria-label="隐藏背景" className="flex w-[30px] items-center justify-center border-r border-[#444]">
            <Eye />
          </button>
          <div className="flex flex-1 items-center pl-1">
            <div className="size-8 bg-[#333]" />
            <span className="ml-2.5">背景</span>
            <Icon w={11} h={12} className="mr-[17px] ml-auto">
              <path d="M1 5.5h9v6H1z" stroke="currentColor" strokeWidth="1.2" />
              <path d="M3 5V3.5a2.5 2.5 0 0 1 5 0V5M5.5 7.5v2" stroke="currentColor" strokeWidth="1.2" />
            </Icon>
          </div>
        </li>
      </ul>
      <div className="w-4 shrink-0 bg-[#4a4a4a]" />
    </div>
    <div className="flex h-[25px] shrink-0 items-center gap-[11px] border-t border-[#3d3d3d] pl-20">
      <button aria-label="链接图层">
        <LinkIcon tone="text-[#8a8a8a]" />
      </button>
      <button aria-label="图层样式" className="relative flex h-4 w-4 items-center">
        <Icon w={16} h={16}>
          <path
            d="M2 15c2 0 2.5-1.5 3-4l1-5c.5-2.5 1.5-3.5 3.5-3M3.5 7h5M9 7.5c1.5 0 1.5 1 2 2.5s.8 2.5 2.5 2.5M14.5 7.5c-2 0-3 5-6 5"
            stroke="currentColor"
            strokeWidth="1.5"
          />
        </Icon>
        <Corner className="-bottom-1 left-[14px]" />
      </button>
      <button aria-label="图层蒙版">
        <Icon w={16} h={12}>
          <path d="M1 1h13v10H1z" fill="currentColor" />
          <circle cx="7.5" cy="6" r="3" fill="#444" />
        </Icon>
      </button>
      <button aria-label="调整图层" className="relative">
        <Icon w={16} h={16}>{filterIcons[1].glyph}</Icon>
        <Corner className="-bottom-1 left-[14px]" />
      </button>
      <button aria-label="新建组">
        <Icon w={16} h={12}>
          <path d="M2 1h5l1 2h6v8H2z" fill="currentColor" />
        </Icon>
      </button>
      <button aria-label="新建图层">
        <Icon w={16} h={14}>
          <path d="M4 2h9v10H7.5L4 8.5zM4 8h4v4" stroke="currentColor" strokeWidth="1.2" />
        </Icon>
      </button>
      <button aria-label="删除图层">
        <Icon w={12} h={14}>
          <path d="M1 3h10M4 3V1h4v2M2 4.5l.5 8.5h7l.5-8.5M4.5 5v6M6 5v6M7.5 5v6" stroke="currentColor" strokeWidth="1.2" />
        </Icon>
      </button>
    </div>
  </section>
);

const Panels = () => (
  <aside className="flex w-[288px] shrink-0 flex-col border-r-2 border-[#383838]">
    <div className="flex h-3 shrink-0 items-center justify-end border-b border-[#383838] bg-[#424242] pr-1.5">
      <Arrows />
    </div>
    <div className="flex min-h-0 flex-1 flex-col border-l border-[#383838]">
      <ColorPanel />
      <PropertiesPanel />
      <LayersPanel />
    </div>
  </aside>
);

const LibraryStrip = () => (
  <aside className="flex w-[65px] shrink-0 flex-col border-r border-[#383838]">
    <div className="flex h-3 shrink-0 items-center justify-end border-b border-[#383838] bg-[#424242] pr-1.5">
      <Arrows left />
    </div>
    <div className="flex h-[41px] shrink-0 flex-col items-center border-b border-[#383838] pt-[3px]">
      <Grip />
      <button aria-label="库" className="mt-2 mr-[26px]">
        <Icon w={22} h={16}>
          <path
            d="M7 15.3h8.5a6 6 0 0 0 0-14c-2.7-.5-5 .8-6.2 2.9A5.6 5.6 0 0 0 1 9.5c0 3.2 2.7 5.8 6 5.8z"
            fill="#b5b5b5"
            stroke="#dcdcdc"
          />
          <path
            d="M9 12.5H7a3.2 3.2 0 1 1 2.2-5.5l4 4c2 1.9 5.3.7 5.3-2.5 0-4-5-5-6.7-1.5"
            stroke="#4a4a4a"
            strokeWidth="1.2"
          />
        </Icon>
      </button>
    </div>
  </aside>
);

const App: React.FC = () => {
  return (
    <div className="relative flex h-screen min-h-[760px] flex-col overflow-hidden bg-[#535353] font-['Noto_Sans','Noto_Sans_CJK_SC',sans-serif]">
      <MenuBar />
      <OptionsBar />
      <div className="flex min-h-0 flex-1">
        <Toolbar />
        <Workspace />
        <IconStrip />
        <Panels />
        <LibraryStrip />
      </div>
      <footer className="h-[3px] shrink-0 bg-[#4d2f55]">
        <div className="ml-[446px] h-full w-[72px] bg-[#7c4a94]" />
      </footer>

      {/* desktop widgets floating over the right edge */}
      <div className="absolute top-[296px] -right-[34px] size-[45px] rounded-full border-2 border-[#9ccfc7] bg-[#b3ddd7]" />
      <div className="absolute top-[447px] right-0 h-[89px] w-[15px] rounded-l-md border-2 border-r-0 border-[#2b2d3d] bg-[#41445c] py-2 pl-1">
        <div className="h-6 w-[7px] bg-[repeating-linear-gradient(#2c2f42_0_2px,#41445c_2px_3px)]" />
        <div className="relative h-[45px] w-[7px] bg-[linear-gradient(#c8c04a,#8cc05c,#3cc8a4)]">
          <div className="absolute inset-0 bg-[repeating-linear-gradient(transparent_0_2px,#2c3a48_2px_3px)]" />
        </div>
      </div>
      <a
        href="https://blog.csdn.net/qq_43468607"
        className="absolute right-2.5 bottom-1.5 font-['Liberation_Sans',sans-serif] text-base leading-6 text-[#c4c4c4]"
      >
        https://blog.csdn.net/qq_43468607
      </a>
    </div>
  );
};

export default App;
